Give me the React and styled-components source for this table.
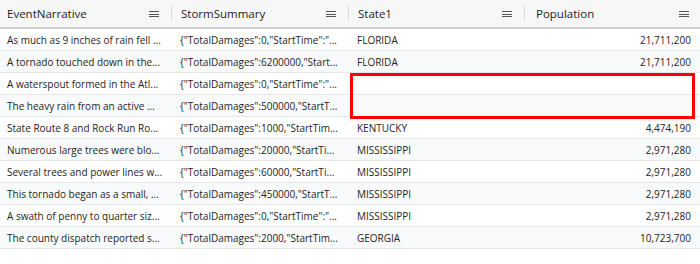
import React from "react";
import styled, { createGlobalStyle } from "styled-components";

const GlobalStyle = createGlobalStyle`
  body {
    margin: 0;
    background: #ffffff;
    font-family: "Open Sans", "Noto Sans", sans-serif;
    color: #242424;
  }
`;

const columns = [
  { key: "narrative", title: "EventNarrative", width: 173 },
  { key: "summary", title: "StormSummary", width: 177 },
  { key: "state", title: "State1", width: 176 },
  { key: "population", title: "Population", width: 174, numeric: true },
];

const rows = [
  ["As much as 9 inches of rain fell ...", "{\"TotalDamages\":0,\"StartTime\":\"...", "FLORIDA", "21,711,200"],
  ["A tornado touched down in the...", "{\"TotalDamages\":6200000,\"Start...", "FLORIDA", "21,711,200"],
  ["A waterspout formed in the Atl...", "{\"TotalDamages\":0,\"StartTime\":\"...", "", ""],
  ["The heavy rain from an active ...", "{\"TotalDamages\":500000,\"StartT...", "", ""],
  ["State Route 8 and Rock Run Ro...", "{\"TotalDamages\":1000,\"StartTim...", "KENTUCKY", "4,474,190"],
  ["Numerous large trees were blo...", "{\"TotalDamages\":20000,\"StartTi...", "MISSISSIPPI", "2,971,280"],
  ["Several trees and power lines w...", "{\"TotalDamages\":60000,\"StartTi...", "MISSISSIPPI", "2,971,280"],
  ["This tornado began as a small, ...", "{\"TotalDamages\":450000,\"StartT...", "MISSISSIPPI", "2,971,280"],
  ["A swath of penny to quarter siz...", "{\"TotalDamages\":0,\"StartTime\":\"...", "MISSISSIPPI", "2,971,280"],
  ["The county dispatch reported s...", "{\"TotalDamages\":2000,\"StartTim...", "GEORGIA", "10,723,700"],
];

const template = columns.map((c) => `${c.width}px`).join(" ");

const Grid = styled.div`
  position: relative;
  width: 700px;
`;

const HeaderRow = styled.div`
  display: grid;
  grid-template-columns: ${template};
  height: 27px;
  background: #f7f7f8;
  border-bottom: 2px solid #cfcfcf;
`;

const HeaderCell = styled.div`
  display: flex;
  align-items: center;
  padding-left: ${(p) => (p.$first ? "7px" : p.$last ? "10px" : "8px")};
  font-size: 11.5px;
  color: #222;
  min-width: 0;
`;

const HeaderTitle = styled.span`
  flex: 1;
  white-space: nowrap;
  overflow: hidden;
`;

const MenuIcon = styled.span`
  display: flex;
  flex-direction: column;
  gap: 1.5px;
  width: 10px;
  margin-right: ${(p) => (p.$last ? "11px" : "12px")};
  margin-top: 1px;

  span {
    height: 1px;
    background: #555;
  }
`;

const Divider = styled.span`
  width: 1px;
  height: 15px;
  margin-right: 1px;
  background: #d9d9d9;
`;

const Row = styled.div`
  display: grid;
  grid-template-columns: ${template};
  height: 21px;
  border-bottom: 1px solid #e6e7ea;
  background: ${(p) => (p.$odd ? "#f9fafc" : "#ffffff")};
`;

const Cell = styled.div`
  display: flex;
  align-items: center;
  justify-content: ${(p) => (p.$numeric ? "flex-end" : "flex-start")};
  padding: ${(p) => (p.$numeric ? "0 9px 0 0" : "0 0 0 7px")};
  font-size: 10px;
  white-space: nowrap;
  overflow: hidden;
  color: #242424;
`;

const Highlight = styled.div`
  position: absolute;
  left: 350px;
  top: 73px;
  width: 345px;
  height: 46px;
  box-sizing: border-box;
  border: 3px solid #ff0000;
  pointer-events: none;
`;

export default function App() {
  return (
    <>
      <GlobalStyle />
      <Grid>
        <HeaderRow>
          {columns.map((c, i) => {
            const last = i === columns.length - 1;
            return (
              <HeaderCell key={c.key} $first={i === 0} $last={last}>
                <HeaderTitle>{c.title}</HeaderTitle>
                <MenuIcon $last={last}>
                  <span />
                  <span />
                  <span />
                </MenuIcon>
                {!last && <Divider />}
              </HeaderCell>
            );
          })}
        </HeaderRow>
        {rows.map((r, ri) => (
          <Row key={ri} $odd={ri % 2 === 1}>
            {r.map((v, ci) => (
              <Cell key={ci} $numeric={columns[ci].numeric}>
                {v}
              </Cell>
            ))}
          </Row>
        ))}
        <Highlight />
      </Grid>
    </>
  );
}
